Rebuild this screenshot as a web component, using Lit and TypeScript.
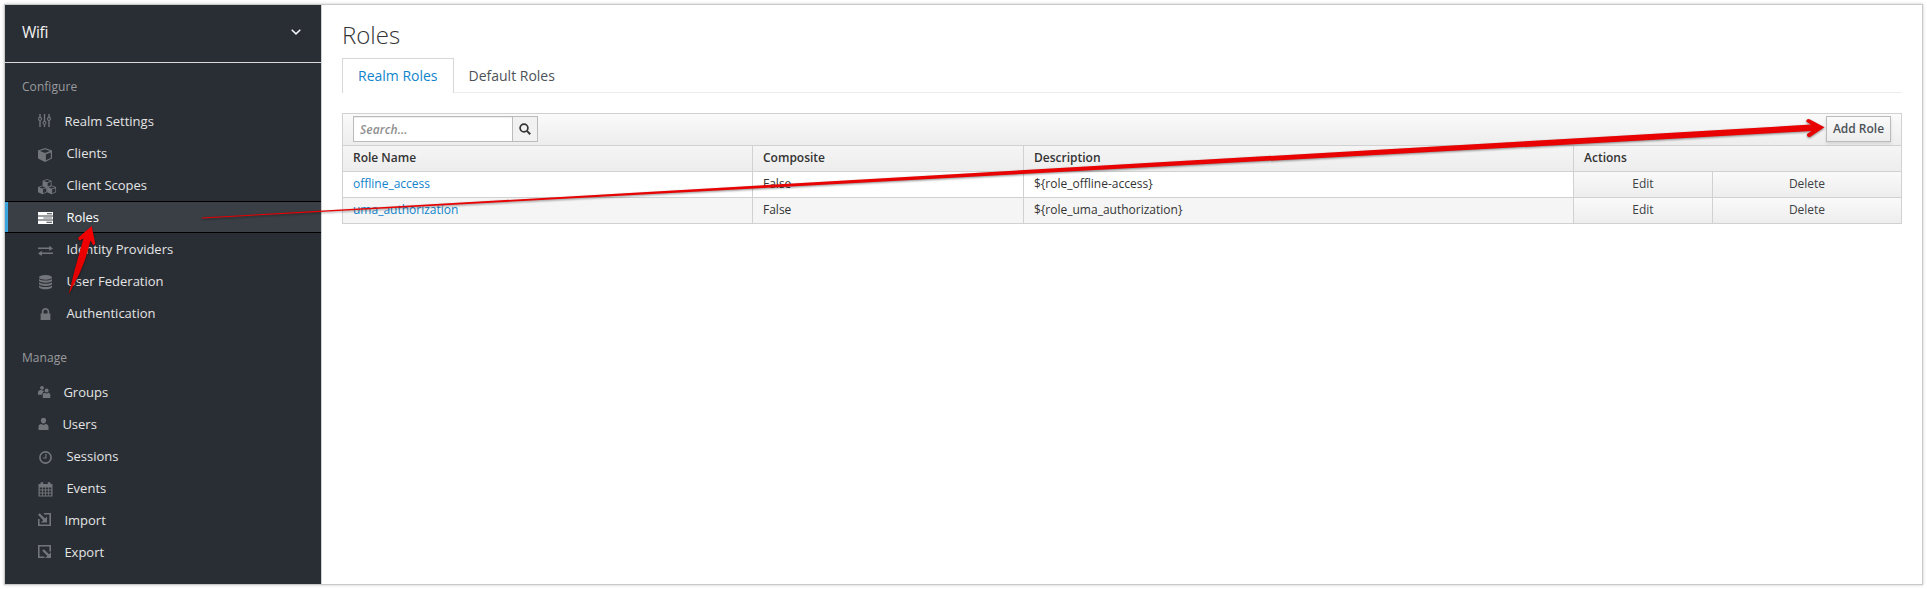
import { LitElement, html, svg, css, type SVGTemplateResult } from "lit";
import { customElement, property } from "lit/decorators.js";

interface NavItem {
  label: string;
  icon: string;
  width: number;
  active?: boolean;
}

const cube = (x: number, y: number, s: number) => svg`
  <g transform="translate(${x} ${y}) scale(${s})">
    <path fill-rule="evenodd" d="M7 0L14 2.6V10.6L7 14L0 10.6V2.6Z M7 1.3L2 3.1L7 5L12 3.1Z M7.9 6.2V12.3L12.8 9.9V4.4Z"/>
  </g>`;

const icons: Record<string, SVGTemplateResult> = {
  settings: svg`<path d="M1.3 1H2.7V4.2H1.3Z M1.3 7.6H2.7V14H1.3Z M5.8 1H7.2V8H5.8Z M5.8 11.4H7.2V14H5.8Z M10.3 1H11.7V4.2H10.3Z M10.3 7.6H11.7V14H10.3Z"/>
    <g fill="none" stroke="currentColor" stroke-width="1.1"><circle cx="2" cy="5.9" r="1.5"/><circle cx="6.5" cy="9.7" r="1.5"/><circle cx="11" cy="5.9" r="1.5"/></g>`,
  cube: cube(0, 3, 1),
  cubes: svg`${cube(4.6, 2, 0.64)}${cube(0, 8.4, 0.64)}${cube(9.1, 8.4, 0.64)}`,
  tasks: svg`<path fill-rule="evenodd" d="M0 3H15V6.4H0Z M9 4.2V5.2H14V4.2Z M0 7.4H15V10.6H0Z M5.5 8.4V9.6H14V8.4Z M0 11.6H15V15H0Z M8.5 12.8V13.8H14V12.8Z"/>
    <path opacity=".45" d="M5.5 8.4H14V9.6H5.5Z"/>`,
  exchange: svg`<path d="M0 6.1H11.2V4.4L15 7L11.2 9.4V7.7H0Z M15 11.2V12.7H3.8V14.6L0 12L3.8 9.3V11.2Z" transform="translate(0 .4)"/>`,
  database: svg`<ellipse cx="7.5" cy="4.4" rx="6.5" ry="2.3"/>
    <path d="M1 6C3.5 8 11.5 8 14 6V8C12 10.3 3 10.3 1 8Z M1 9.3C3.5 11.3 11.5 11.3 14 9.3V11.2C12 13.5 3 13.5 1 11.2Z M1 12.6C3.5 14.6 11.5 14.6 14 12.6V14.3C12 17 3 17 1 14.3Z"/>`,
  lock: svg`<path fill-rule="evenodd" d="M2.6 8.5H3.8V6.5C3.8 1.8 11.2 1.8 11.2 6.5V8.5H12.4V15H2.6Z M5.5 8.5H9.5V6.5C9.5 4.2 5.5 4.2 5.5 6.5Z"/>`,
  groups: svg`<circle cx="4" cy="3.8" r="1.9"/><path d="M0 10.8V8.5C0 6.5 1.8 6 3.6 6L6.2 7.2C4.8 8 4.3 9 4.2 10.8Z"/>
    <circle cx="8.6" cy="6.4" r="2"/><path d="M4.8 14V11.5C4.8 9.3 6 9 7 8.8L8.6 9.8L10.2 8.8C11.5 9 12.3 9.5 12.3 11.5V14Z"/>`,
  user: svg`<ellipse cx="5.5" cy="4.6" rx="2.6" ry="2.8"/><path d="M.5 14V11C.5 8.7 2 8.2 3.3 8L5.5 9L7.7 8C9 8.2 10.5 8.7 10.5 11V14Z"/>`,
  clock: svg`<circle cx="7.5" cy="9.5" r="5.6" fill="none" stroke="currentColor" stroke-width="1.6"/>
    <path d="M7.3 6H8.5V10.6H5V9.4H7.3Z"/>`,
  calendar: svg`<path fill-rule="evenodd" d="M.5 4H14.5V16.6H.5Z M1.7 7.5V9.6H4V7.5Z M4.8 7.5V9.6H7.2V7.5Z M8 7.5V9.6H10.3V7.5Z M11.1 7.5V9.6H13.3V7.5Z M1.7 10.4V12.6H4V10.4Z M4.8 10.4V12.6H7.2V10.4Z M8 10.4V12.6H10.3V10.4Z M11.1 10.4V12.6H13.3V10.4Z M1.7 13.4V15.5H4V13.4Z M4.8 13.4V15.5H7.2V13.4Z M8 13.4V15.5H10.3V13.4Z M11.1 13.4V15.5H13.3V13.4Z"/>
    <path d="M2.6 2.3H5.2V6H2.6Z M9.8 2.3H12.4V6H9.8Z"/>`,
  import: svg`<path d="M6 1H13V14H0V7H1.6V12.4H11.4V2.6H6Z"/><path d="M0 2.8L1.7 1.2L7 6.4L9 4.5V10.4H3L5.2 8.2Z"/>`,
  export: svg`<path d="M0 1H13V7.5H11.4V2.6H1.6V12.4H6.5V14H0Z"/><path d="M4.2 6.8L5.9 5.2L11 10.2L13 8.2V14H7.2L9.3 11.9Z"/>`,
};

@customElement("nav-section")
export class NavSection extends LitElement {
  @property() heading = "";
  @property({ attribute: false }) items: NavItem[] = [];

  static styles = css`
    :host { display: block; }
    .heading {
      margin: 0; padding-left: 17px; height: 42px; line-height: 47px;
      font-size: 12px; font-weight: 400; color: #999b9e;
      letter-spacing: 0.05px;
    }
    .list { margin: 0; padding: 0; list-style: none; }
    .item {
      box-sizing: border-box; height: 32px; padding-left: 33px;
      display: flex; align-items: center; gap: 13.4px;
      font-size: 13px; color: #e4e4e4;
    }
    .icon { display: block; flex: none; overflow: visible; fill: currentColor; color: #72767b; }
    .active {
      color: #fff; background: #393f45;
      border: solid #000; border-width: 1px 0;
      box-shadow: inset 3px 0 #39a5dc;
    }
    .active .icon { color: #fff; }
  `;

  render() {
    return html`
      <h2 class="heading">${this.heading}</h2>
      <ul class="list">
        ${this.items.map((item) => html`
          <li class="item ${item.active ? "active" : ""}">
            <svg class="icon" width=${item.width} height="16">${icons[item.icon]}</svg>
            <span>${item.label}</span>
          </li>`)}
      </ul>`;
  }
}

@customElement("app-root")
export class AppRoot extends LitElement {
  private configure: NavItem[] = [
    { label: "Realm Settings", icon: "settings", width: 13 },
    { label: "Clients", icon: "cube", width: 15 },
    { label: "Client Scopes", icon: "cubes", width: 15 },
    { label: "Roles", icon: "tasks", width: 15, active: true },
    { label: "Identity Providers", icon: "exchange", width: 15 },
    { label: "User Federation", icon: "database", width: 15 },
    { label: "Authentication", icon: "lock", width: 15 },
  ];

  private manage: NavItem[] = [
    { label: "Groups", icon: "groups", width: 12 },
    { label: "Users", icon: "user", width: 11 },
    { label: "Sessions", icon: "clock", width: 15 },
    { label: "Events", icon: "calendar", width: 15 },
    { label: "Import", icon: "import", width: 13 },
    { label: "Export", icon: "export", width: 13 },
  ];

  private roles = [
    { name: "offline_access", composite: "False", description: "${role_offline-access}" },
    { name: "uma_authorization", composite: "False", description: "${role_uma_authorization}" },
  ];

  static styles = css`
    :host {
      display: block; box-sizing: border-box; position: relative;
      width: 1927px; height: 589px; padding: 4px; background: #fff;
      font-family: "Open Sans", sans-serif; font-size: 12px; color: #333;
    }
    .frame {
      box-sizing: border-box; width: 1919px; height: 581px; display: flex;
      border: 1px solid #c9c9c9; box-shadow: 0 0 3px rgba(0, 0, 0, 0.22);
    }
    .sidebar { box-sizing: border-box; width: 317px; flex: none; background: #292e34; border-right: 1px solid #d1d1d1; }
    .realm {
      box-sizing: border-box; height: 58px; padding: 0 20px 3px 17px;
      display: flex; align-items: center; justify-content: space-between;
      border-bottom: 1px solid #d9d9d9; color: #f4f4f4;
    }
    .realm-name { font-size: 15.5px; line-height: 22px; padding-bottom: 1px; letter-spacing: -0.3px; }
    .configure { height: 271px; }
    .main { flex: 1; padding: 15px 20px 0; }
    .title { margin: 0; height: 38px; line-height: 30px; font-size: 24px; font-weight: 300; color: #333; }
    .tabs { display: flex; width: 1560px; height: 34px; border-bottom: 1px solid #ececec; font-size: 14px; }
    .tab { box-sizing: border-box; height: 35px; padding: 0 14.5px; line-height: 35px; color: #4d5258; }
    .current { width: 112px; padding: 0 15px; color: #1284cb; background: #fff; border: 1px solid #d8d8d8; border-bottom: 0; line-height: 34px; white-space: nowrap; }
    .table {
      margin-top: 20px; width: 1560px; display: grid;
      grid-template-columns: 410px 271px 550px 139px 189px;
      box-sizing: border-box; border: solid #d1d1d1; border-width: 1px 0 0 1px;
    }
    .toolbar, .cell { box-sizing: border-box; border: solid #d1d1d1; border-width: 0 1px 1px 0; }
    .toolbar {
      grid-column: 1 / -1; height: 32px; padding: 2px 10px 2px;
      display: flex; justify-content: space-between; align-items: flex-start;
      background: linear-gradient(#fafafa, #ededed);
    }
    .search { display: flex; }
    .input, .find, .add { box-sizing: border-box; height: 26px; border: 1px solid #bbb; }
    .input {
      width: 159px; padding: 0 6px; border-right: 0; line-height: 25px;
      font-size: 12px; font-style: italic; font-weight: 600; color: #8f8f8f; letter-spacing: 0.1px;
      background: #fff; box-shadow: inset 0 1px 1px rgba(3, 3, 3, 0.075);
    }
    .find { width: 26px; padding: 0; display: grid; place-items: center; background: #f1f1f1; }
    .add {
      width: 65px; padding: 0; font: 600 12px/24px "Open Sans", sans-serif; color: #4d5258;
      background: linear-gradient(#fafafa, #ededed); box-shadow: 0 2px 3px rgba(3, 3, 3, 0.1);
    }
    .cell { height: 26px; line-height: 24px; padding-left: 10px; white-space: nowrap; }
    .head { font-weight: 600; background: linear-gradient(#f5f5f5, #ededed); }
    .wide { grid-column: span 2; }
    .even { background: #f5f5f5; }
    .link { color: #1284cb; }
    .action { padding: 0; text-align: center; color: #3d4146; background: linear-gradient(#fafafa, #ededed); }
    .annotations { position: absolute; inset: 0; pointer-events: none; filter: drop-shadow(0 1px 1px rgba(0, 0, 0, 0.45)); }
  `;

  render() {
    return html`
      <div class="frame">
        <nav class="sidebar">
          <div class="realm">
            <span class="realm-name">Wifi</span>
            <svg width="10" height="6" fill="none" stroke="currentColor" stroke-width="1.5"><path d="M.7 .8L5 4.9L9.3 .8"/></svg>
          </div>
          <nav-section class="configure" heading="Configure" .items=${this.configure}></nav-section>
          <nav-section heading="Manage" .items=${this.manage}></nav-section>
        </nav>
        <main class="main">
          <h1 class="title">Roles</h1>
          <div class="tabs">
            <div class="tab current">Realm Roles</div>
            <div class="tab">Default Roles</div>
          </div>
          <div class="table">
            <div class="toolbar">
              <div class="search">
                <div class="input">Search...</div>
                <button class="find" aria-label="Search">
                  <svg width="12" height="12" fill="none" stroke="#333"><circle cx="5" cy="5" r="3.9" stroke-width="1.7"/><path stroke-width="2" d="M7.9 7.9L11.2 11.2"/></svg>
                </button>
              </div>
              <button class="add">Add Role</button>
            </div>
            <div class="cell head">Role Name</div>
            <div class="cell head">Composite</div>
            <div class="cell head">Description</div>
            <div class="cell head wide">Actions</div>
            ${this.roles.map((role, i) => {
              const tone = i % 2 ? "even" : "";
              return html`
                <div class="cell link ${tone}">${role.name}</div>
                <div class="cell ${tone}">${role.composite}</div>
                <div class="cell ${tone}">${role.description}</div>
                <div class="cell action">Edit</div>
                <div class="cell action">Delete</div>`;
            })}
          </div>
        </main>
      </div>
      <svg class="annotations" width="1927" height="589">
        <defs>
          <linearGradient id="red" x1="0" y1="0" x2="0" y2="1"><stop offset="0" stop-color="#f40000"/><stop offset="1" stop-color="#dc0000"/></linearGradient>
        </defs>
        <path fill="#e80202" d="M202 217.6L1560 139.2L1811 124.6L1806.5 121.8Q1805.5 119 1809 119L1824.5 127.3L1810 137Q1806.5 137 1807 134L1811.5 131L1560 145L202 218.4Z"/>
        <path fill="url(#red)" d="M68.7 294.5L74 272.5L83.5 238.3L80 240.5Q77.5 240 78.5 237.5L91.7 226L95.2 243.5Q94 246 92.3 244L90.6 240.3L85 260L79.5 273.5Z"/>
      </svg>`;
  }
}
